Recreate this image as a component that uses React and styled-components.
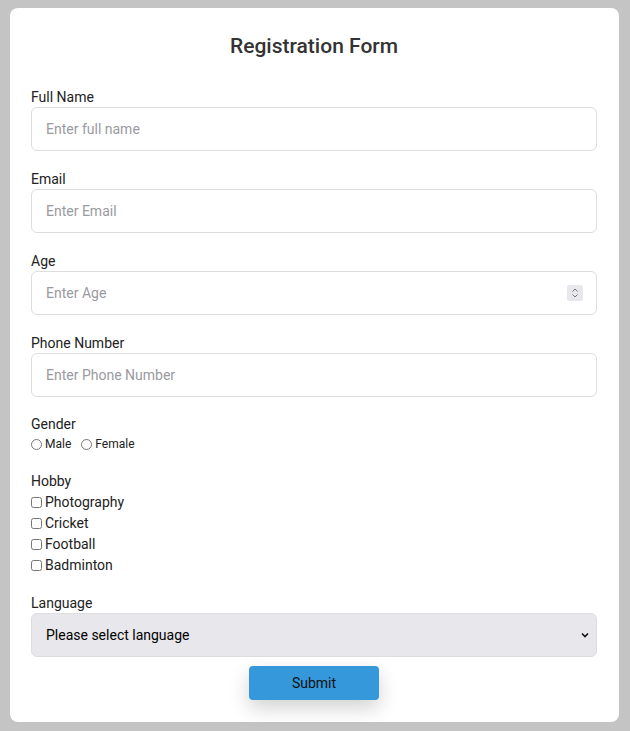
import React from 'react';
import styled, { createGlobalStyle } from 'styled-components';

const GlobalStyle = createGlobalStyle`
  html, body {
    margin: 0;
    padding: 0;
    background: #c4c4c4;
    font-family: Roboto, "Liberation Sans", sans-serif;
  }
`;

const Page = styled.div`
  padding: 8px 11px 9px 10px;
`;

const Card = styled.form`
  background: #ffffff;
  border-radius: 8px;
  padding: 21px 22px 22px 21px;
  display: flex;
  flex-direction: column;
`;

const Title = styled.h2`
  margin: 5px 0 31px;
  text-align: center;
  font-size: 21px;
  line-height: 24px;
  font-weight: 500;
  color: #333333;
`;

const Field = styled.div`
  display: flex;
  flex-direction: column;
  margin-bottom: ${(p) => p.$mb ?? 20}px;
`;

const Label = styled.label`
  font-size: 14px;
  color: #222222;
  line-height: 17px;
  margin-bottom: ${(p) => p.$mb ?? 1}px;
`;

const Input = styled.input`
  box-sizing: border-box;
  height: 44px;
  width: 100%;
  padding: 0 14px;
  border: 1px solid #dddddd;
  border-radius: 6px;
  font-family: inherit;
  font-size: 14px;
  color: #222;
  outline: none;
  &::placeholder {
    color: #9a9aa0;
  }
`;

const Wrap = styled.div`
  position: relative;
`;

const Spinner = styled.span`
  position: absolute;
  right: 14px;
  top: 14px;
  width: 16px;
  height: 16px;
  background: #e8e8ec;
  border-radius: 2px;
  display: flex;
  align-items: center;
  justify-content: center;
  pointer-events: none;
`;

const Chevron = styled.span`
  position: absolute;
  right: 8px;
  top: 19px;
  display: flex;
  pointer-events: none;
`;

const Options = styled.div`
  display: flex;
  flex-direction: ${(p) => (p.$column ? 'column' : 'row')};
  gap: ${(p) => (p.$column ? 4 : 10)}px;
  margin-top: ${(p) => (p.$column ? 4 : 3)}px;
`;

const Option = styled.label`
  display: flex;
  align-items: center;
  font-size: ${(p) => p.$size}px;
  line-height: 17px;
  color: #222;
  input {
    margin: 0 3px 0 0;
    width: ${(p) => p.$box}px;
    height: ${(p) => p.$box}px;
  }
`;

const Select = styled.select`
  box-sizing: border-box;
  appearance: none;
  height: 44px;
  width: 100%;
  padding: 0 14px;
  border: 1px solid #dddddd;
  border-radius: 6px;
  background: #e8e8ec;
  font-family: inherit;
  font-size: 14px;
  color: #000;
  outline: none;
`;

const Submit = styled.button`
  align-self: center;
  width: 130px;
  height: 34px;
  margin-top: 9px;
  border: none;
  border-radius: 4px;
  background: #3498db;
  color: #111;
  font-family: inherit;
  font-size: 14px;
  box-shadow: 0 8px 20px rgba(0, 0, 0, 0.18);
  cursor: pointer;
`;

const hobbies = ['Photography', 'Cricket', 'Football', 'Badminton'];

export default function App() {
  return (
    <>
      <GlobalStyle />
      <Page>
        <Card onSubmit={(e) => e.preventDefault()}>
          <Title>Registration Form</Title>
          <Field>
            <Label>Full Name</Label>
            <Input placeholder="Enter full name" />
          </Field>
          <Field>
            <Label>Email</Label>
            <Input type="email" placeholder="Enter Email" />
          </Field>
          <Field>
            <Label>Age</Label>
            <Wrap>
              <Input type="text" placeholder="Enter Age" />
              <Spinner>
                <svg width="8" height="12" viewBox="0 0 8 12" fill="none" stroke="#777" strokeWidth="1">
                  <path d="M1.5 4.5 L4 2 L6.5 4.5" />
                  <path d="M1.5 7.5 L4 10 L6.5 7.5" />
                </svg>
              </Spinner>
            </Wrap>
          </Field>
          <Field $mb={19}>
            <Label>Phone Number</Label>
            <Input type="tel" placeholder="Enter Phone Number" />
          </Field>
          <Field>
            <Label $mb={0}>Gender</Label>
            <Options>
              <Option $size={12} $box={11}>
                <input type="radio" name="gender" />
                Male
              </Option>
              <Option $size={12} $box={11}>
                <input type="radio" name="gender" />
                Female
              </Option>
            </Options>
          </Field>
          <Field $mb={21}>
            <Label $mb={0}>Hobby</Label>
            <Options $column>
              {hobbies.map((h) => (
                <Option key={h} $size={14} $box={11}>
                  <input type="checkbox" />
                  {h}
                </Option>
              ))}
            </Options>
          </Field>
          <Field $mb={0}>
            <Label>Language</Label>
            <Wrap>
              <Select defaultValue="">
                <option value="">Please select language</option>
                <option value="en">English</option>
                <option value="hi">Hindi</option>
              </Select>
              <Chevron>
                <svg width="8" height="6" viewBox="0 0 8 6" fill="none" stroke="#111" strokeWidth="1.6">
                  <path d="M1 1.5 L4 4.5 L7 1.5" />
                </svg>
              </Chevron>
            </Wrap>
          </Field>
          <Submit type="submit">Submit</Submit>
        </Card>
      </Page>
    </>
  );
}
